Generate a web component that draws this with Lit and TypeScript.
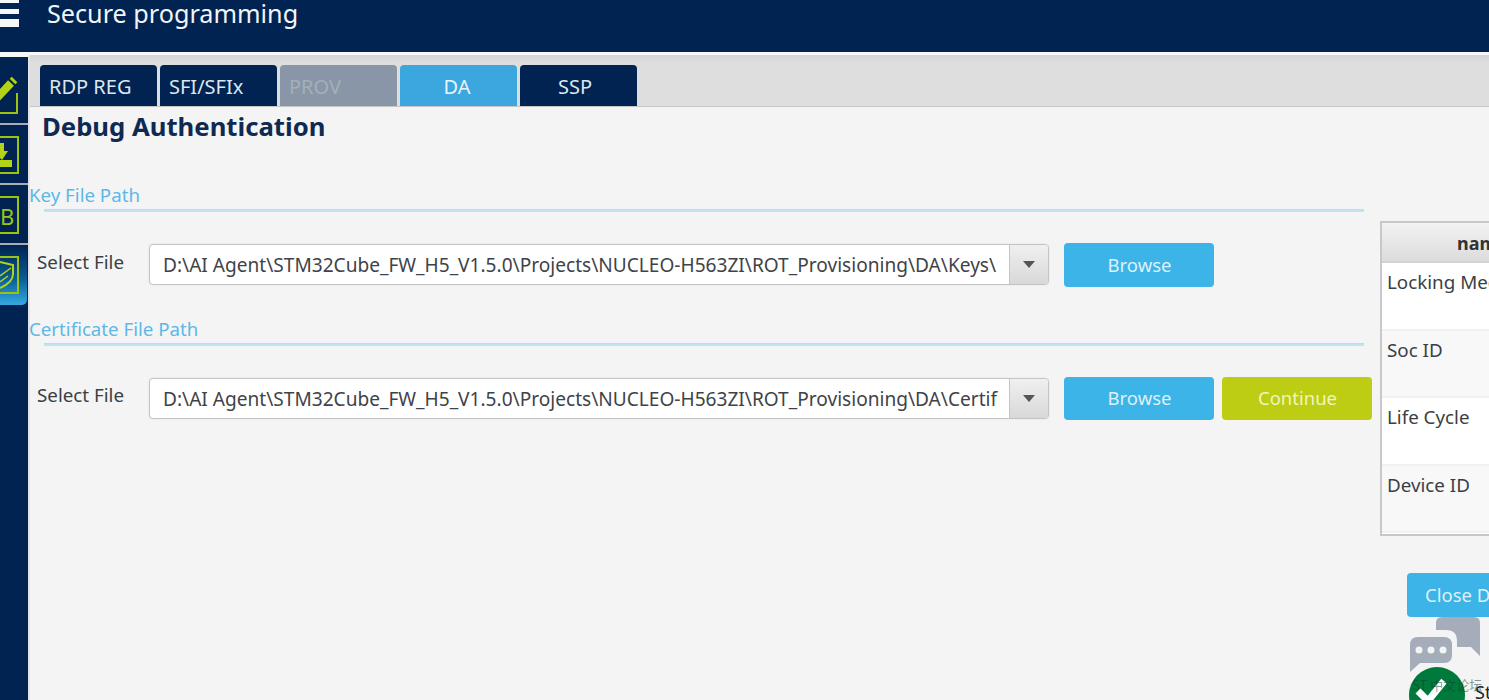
import { LitElement, html, css, svg } from "lit";
import { customElement } from "lit/decorators.js";

const KEY = "D:\\AI Agent\\STM32Cube_FW_H5_V1.5.0\\Projects\\NUCLEO-H563ZI\\ROT_Provisioning\\DA\\Keys\\";
const CERT = "D:\\AI Agent\\STM32Cube_FW_H5_V1.5.0\\Projects\\NUCLEO-H563ZI\\ROT_Provisioning\\DA\\Certif";

@customElement("app-root")
export class AppRoot extends LitElement {
  static styles = css`
    :host { display: block; width: 1489px; height: 700px; overflow: hidden; background: #f4f4f4; font-family: "Noto Sans", "Open Sans", sans-serif; color: #3a3f45; position: relative; }
    * { box-sizing: border-box; }
    .header { height: 55px; background: #002352; border-bottom: 3px solid #f4f6f8; display: flex; align-items: flex-start; gap: 28px; color: #f2f5f8; font-size: 25.2px; line-height: 27px; }
    .burger { display: block; width: 19px; height: 28px; flex: none; }
    .title-top { white-space: nowrap; }
    .body { display: flex; height: 645px; }
    .side { width: 30px; flex: none; background: #002352; border-right: 2px solid #e2e4e7; border-top: 2px solid #f4f6f8; display: flex; flex-direction: column; padding-top: 8px; }
    .side-item { height: 60px; flex: none; border-bottom: 2px solid #a9adb3; overflow: hidden; }
    .side-item svg { display: block; }
    .side-item.last { border-bottom: 0; height: 60px; width: 27px; background: linear-gradient(#002352, #0a5a93 55%, #35a9e2); border-radius: 0 0 5px 0; }
    .main { flex: 1; min-width: 0; display: flex; flex-direction: column; }
    .tabbar { height: 52px; flex: none; background: linear-gradient(#d4d4d4, #dedede 15%); border-bottom: 1px solid #c6c6c6; padding: 10px 0 0 10px; display: flex; gap: 3px; }
    .tab { width: 117px; height: 41px; background: #002352; color: #dfe6ee; border-radius: 4px 4px 0 0; font-size: 20px; display: flex; align-items: center; padding: 2px 0 0 9px; }
    .tab.center { justify-content: center; padding: 2px 3px 0 0; }
    .tab.ssp { padding-right: 7px; }
    .tab.off { background: #8996a7; color: #a6aeb9; }
    .tab.on { background: #3ba7de; color: #e8f4fb; }
    .content { flex: 1; display: flex; min-height: 0; }
    .left { width: 1350px; flex: none; }
    .h1 { margin: 3px 0 0 12px; font-size: 25.7px; line-height: 34px; font-weight: 700; color: #0e2a52; }
    .group { color: #5db8e8; font-size: 18.7px; line-height: 24px; white-space: nowrap; margin-left: -1px; }
    .g1 { margin-top: 39px; }
    .g2 { margin-top: 30px; }
    .rule { margin-left: 14px; width: 1320px; height: 3px; margin-top: 2px; background: linear-gradient(#d0d6da 0 1px, #bfe3f3 1px); }
    .row { display: flex; align-items: center; margin-top: 31px; height: 44px; padding-left: 6px; }
    .row.r2 { height: 43px; }
    .lbl { width: 113px; flex: none; font-size: 18.8px; margin-top: -7px; padding-left: 1px; }
    .combo { width: 900px; height: 41px; margin-top: -1px; display: flex; background: #fff; border: 1px solid #c4c4c4; border-radius: 4px; box-shadow: 0 0 2px #ddd; overflow: hidden; flex: none; }
    .val { flex: 1; min-width: 0; padding-left: 13px; font-size: 19.1px; line-height: 40px; white-space: nowrap; overflow: hidden; color: #3f4348; }
    .arrow { width: 39px; flex: none; border-left: 1px solid #c4c4c4; background: linear-gradient(#f0f0f0, #d8d8d8); display: flex; align-items: center; justify-content: center; }
    .tri { width: 0; height: 0; border: 6px solid transparent; border-top: 7px solid #555; border-bottom: 0; }
    .btn { width: 150px; height: 100%; flex: none; border-radius: 4px; color: #dcf1fb; background: #3cb4e7; font-size: 18.5px; display: flex; align-items: center; justify-content: center; margin-left: 15px; padding: 0 0 2px 1px; }
    .btn.cont { background: #bccd13; color: #f0f5c0; margin-left: 8px; }
    .right { width: 109px; flex: none; }
    .table { margin-top: 114px; width: 140px; height: 315px; border: 2px solid #c8c8c8; background: #fff; }
    .th { height: 40px; background: linear-gradient(#f2f2f2, #dcdcdc); border-bottom: 2px solid #d2d2d2; font-weight: 700; font-size: 18px; line-height: 40px; padding-left: 75px; color: #333; white-space: nowrap; overflow: hidden; }
    .td { height: 67.5px; padding: 4px 0 0 5px; font-size: 18.8px; line-height: 30px; white-space: nowrap; border-bottom: 2px solid #f1f1f1; }
    .td.alt { background: #f8f8f8; }
    .close { margin: 37px 0 0 27px; width: 120px; height: 44px; background: #3cb4e7; border-radius: 4px; color: #dcf1fb; font-size: 18.5px; line-height: 43px; padding-left: 18px; white-space: nowrap; }
    .chat { display: block; margin-left: 29px; }
    .status { display: flex; align-items: flex-end; margin: -6px 0 0 28px; height: 34px; gap: 9px; width: 140px; }
    .status svg { flex: none; }
    .st { font-size: 18px; line-height: 20px; color: #222; margin-bottom: -2px; }
    .mark { position: absolute; left: 1412px; top: 675px; font-size: 13px; color: rgba(10, 60, 50, 0.5); white-space: nowrap; font-family: "Noto Sans CJK SC", sans-serif; }
  `;

  private icon(body: unknown) {
    return html`<svg width="24" height="57" viewBox="0 0 24 57" fill="none" stroke="#9cc40f" stroke-width="2">${body}</svg>`;
  }

  render() {
    const row = (v: string, cont: boolean, cls: string) => html`<div class="row ${cls}">
      <div class="lbl">Select File</div>
      <div class="combo"><div class="val">${v}</div><div class="arrow"><div class="tri"></div></div></div>
      <div class="btn">Browse</div>
      ${cont ? html`<div class="btn cont">Continue</div>` : ""}
    </div>`;
    return html`
      <div class="header">
        <svg class="burger" viewBox="0 0 19 28"><path fill="#f4f6f8" d="M0 0h19v3H0zM0 9h19v5H0zM0 19h19v8H0z"/></svg>
        <div class="title-top">Secure programming</div>
      </div>
      <div class="body">
        <nav class="side">
          <div class="side-item">${this.icon(svg`
            <path d="M-4 34L11 18" stroke-width="8" stroke="#b3d414"/>
            <path d="M12.500 16.500l2-2" stroke="#b3d414" stroke-width="8"/>
            <path d="M17 28v20H0" />`)}</div>
          <div class="side-item">${this.icon(svg`
            <path d="M0 12h18v36H0" />
            <path d="M0 18h4v8h4l-6 9-2-2z" fill="#b3d414" stroke="none"/>
            <path d="M0 35h12v7H0z" fill="#b3d414" stroke="none"/>`)}</div>
          <div class="side-item">${this.icon(svg`
            <path d="M0 12h18v36H0" />
            <text x="0" y="40" font-family="Noto Sans" font-size="22" fill="#9cc40f" stroke="none">B</text>`)}</div>
          <div class="side-item last">${this.icon(svg`
            <path d="M0 12h18v36H0" />
            <path d="M0 17l13 3v9c0 6-6 11-13 14" stroke="#b3d414"/>
            <path d="M0 31l11-8M0 37l8-6" stroke="#b3d414" stroke-width="1.500"/>`)}</div>
        </nav>
        <div class="main">
          <div class="tabbar">
            <div class="tab">RDP REG</div>
            <div class="tab">SFI/SFIx</div>
            <div class="tab off">PROV</div>
            <div class="tab on center">DA</div>
            <div class="tab center ssp">SSP</div>
          </div>
          <div class="content">
            <div class="left">
              <div class="h1">Debug Authentication</div>
              <div class="group g1">Key File Path</div>
              <div class="rule"></div>
              ${row(KEY, false, "")}
              <div class="group g2">Certificate File Path</div>
              <div class="rule"></div>
              ${row(CERT, true, "r2")}
            </div>
            <div class="right">
              <div class="table">
                <div class="th">name</div>
                <div class="td">Locking Mechanism</div>
                <div class="td alt">Soc ID</div>
                <div class="td">Life Cycle</div>
                <div class="td alt">Device ID</div>
              </div>
              <div class="close">Close Debug</div>
              <svg class="chat" width="72" height="55" viewBox="0 0 72 55">
                <path fill="#a5adba" d="M33 0H65Q71 0 71 6V39L62 30H48V24Q48 13 37 13H27V6Q27 0 33 0Z"/>
                <path fill="#a5adba" d="M9 20H35Q43 20 43 28V38Q43 46 35 46H11L1 55V28Q1 20 9 20Z"/>
                <circle cx="10" cy="33" r="3.500" fill="#f4f4f4"/><circle cx="22" cy="33" r="3.500" fill="#f4f4f4"/><circle cx="34" cy="33" r="3.500" fill="#f4f4f4"/>
              </svg>
              <div class="status">
                <svg width="58" height="34" viewBox="0 0 58 34">
                  <circle cx="29" cy="29" r="28" fill="#007a3a"/>
                  <path d="M10 25l10 10 16-20" stroke="#fff" stroke-width="7" fill="none"/>
                </svg>
                <div class="st">Status</div>
              </div>
            </div>
          </div>
        </div>
      </div>
      <div class="mark">ST 中文论坛</div>
    `;
  }
}
